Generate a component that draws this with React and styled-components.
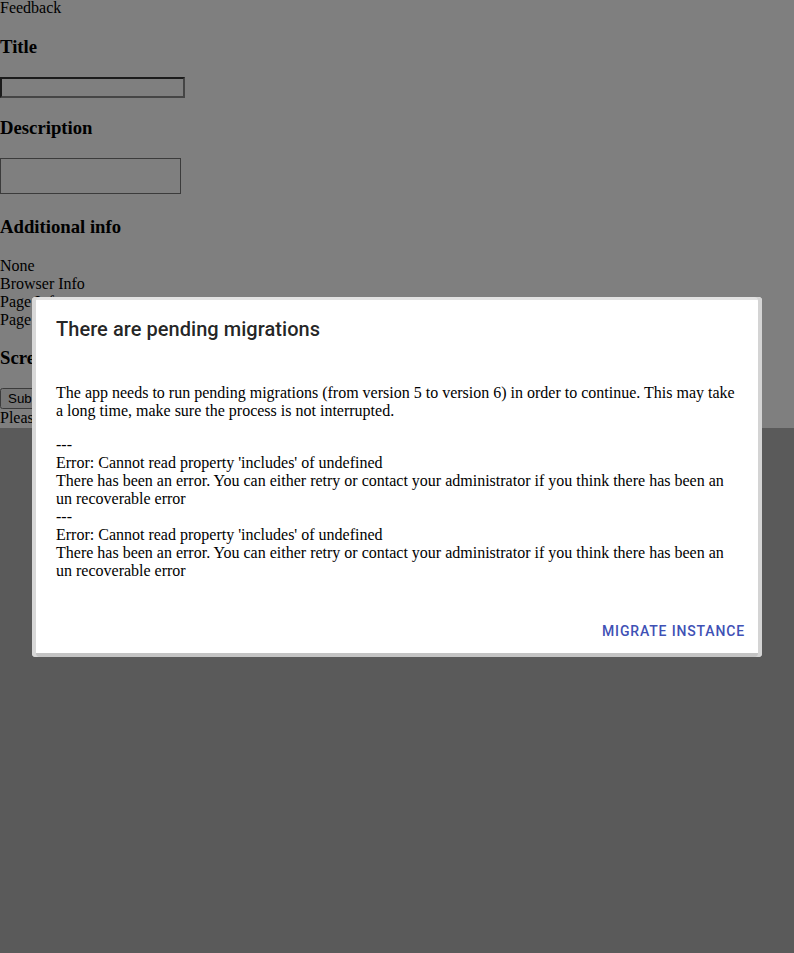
import React from "react";
import styled, { createGlobalStyle } from "styled-components";

const Global = createGlobalStyle`
  html, body {
    margin: 0;
    padding: 0;
    background: #b4b4b4;
  }
  body {
    font-family: "Liberation Serif", "Times New Roman", serif;
    font-size: 16px;
    color: #000;
  }
`;

const Page = styled.div`
  background: #ffffff;
  height: 428px;
  box-sizing: border-box;
  overflow: hidden;
`;

const Caption = styled.div`
  font-size: 16px;
  line-height: 16px;
`;

const Heading = styled.h3`
  font-family: "Liberation Serif", "Times New Roman", serif;
  font-size: 18.72px;
  font-weight: 700;
  line-height: 22px;
  margin: ${(p) => p.$top}px 0 19px;
`;

const TextInput = styled.input`
  display: block;
  box-sizing: border-box;
  width: 185px;
  height: 21px;
  margin: 0;
  border: 2px inset #8a8a8a;
  background: #fff;
  font-family: "Liberation Sans", Arial, sans-serif;
  font-size: 13.33px;
`;

const TextArea = styled.textarea`
  display: block;
  box-sizing: border-box;
  width: 181px;
  height: 36px;
  margin: 0;
  resize: none;
  border: 1px solid #767676;
  font-family: "Liberation Mono", monospace;
  font-size: 13.33px;
`;

const Option = styled.div`
  line-height: 18px;
`;

const SubmitButton = styled.button`
  display: block;
  margin: 0;
  height: 21px;
  font-family: "Liberation Sans", Arial, sans-serif;
  font-size: 13.33px;
`;

const Line = styled.div`
  line-height: 18px;
`;

const Backdrop = styled.div`
  position: fixed;
  inset: 0;
  background: rgba(0, 0, 0, 0.5);
  display: flex;
  align-items: center;
  justify-content: center;
`;

const Paper = styled.div`
  margin: 32px;
  width: 100%;
  background: #ffffff;
  border-radius: 4px;
  box-shadow: inset 4px 0 0 #d8d8d8, inset -4px 0 0 #d4d4d4,
    inset 0 3px 0 #e2e2e2, inset 0 -4px 0 #c4c4c4;
  display: flex;
  flex-direction: column;
`;

const DialogTitle = styled.h2`
  margin: 0;
  padding: 16px 24px;
  font-family: Roboto, "Liberation Sans", sans-serif;
  font-size: 20px;
  font-weight: 500;
  line-height: 32px;
  letter-spacing: 0.05px;
  color: rgba(0, 0, 0, 0.87);
`;

const DialogContent = styled.div`
  padding: 7px 24px 9px;
  font-family: "Liberation Serif", "Times New Roman", serif;
  font-size: 16px;
  line-height: 18px;
  color: #000;
`;

const Paragraph = styled.p`
  margin: 16px 0;
  white-space: pre-line;
`;

const DialogActions = styled.div`
  display: flex;
  justify-content: flex-end;
  padding: 8px;
`;

const TextButton = styled.button`
  border: 0;
  background: transparent;
  padding: 6px 8px;
  margin-right: 1px;
  font-family: Roboto, "Liberation Sans", sans-serif;
  font-size: 14px;
  font-weight: 500;
  line-height: 24px;
  letter-spacing: 0.85px;
  text-transform: uppercase;
  color: #3f51b5;
  border-radius: 4px;
  cursor: pointer;
`;

const errorBlock = `Error: Cannot read property 'includes' of undefined
There has been an error. You can either retry or contact your administrator if you think there has been an un recoverable error`;

export default function App() {
  return (
    <>
      <Global />
      <Page>
        <Caption>Feedback</Caption>
        <Heading $top={20}>Title</Heading>
        <TextInput type="text" />
        <Heading $top={19}>Description</Heading>
        <TextArea />
        <Heading $top={22}>Additional info</Heading>
        <Option>None</Option>
        <Option>Browser Info</Option>
        <Option>Page Info</Option>
        <Option>Page Screenshot</Option>
        <Heading $top={18}>Screenshot</Heading>
        <SubmitButton type="button">Submit</SubmitButton>
        <Line>Please wait...</Line>
      </Page>
      <Backdrop>
        <Paper role="dialog">
          <DialogTitle>There are pending migrations</DialogTitle>
          <DialogContent>
            <Paragraph>
              The app needs to run pending migrations (from version 5 to version 6) in order to continue. This may take a long time, make sure the process is not interrupted.
            </Paragraph>
            <Paragraph>{`---\n${errorBlock}\n---\n${errorBlock}`}</Paragraph>
          </DialogContent>
          <DialogActions>
            <TextButton type="button">Migrate instance</TextButton>
          </DialogActions>
        </Paper>
      </Backdrop>
    </>
  );
}
